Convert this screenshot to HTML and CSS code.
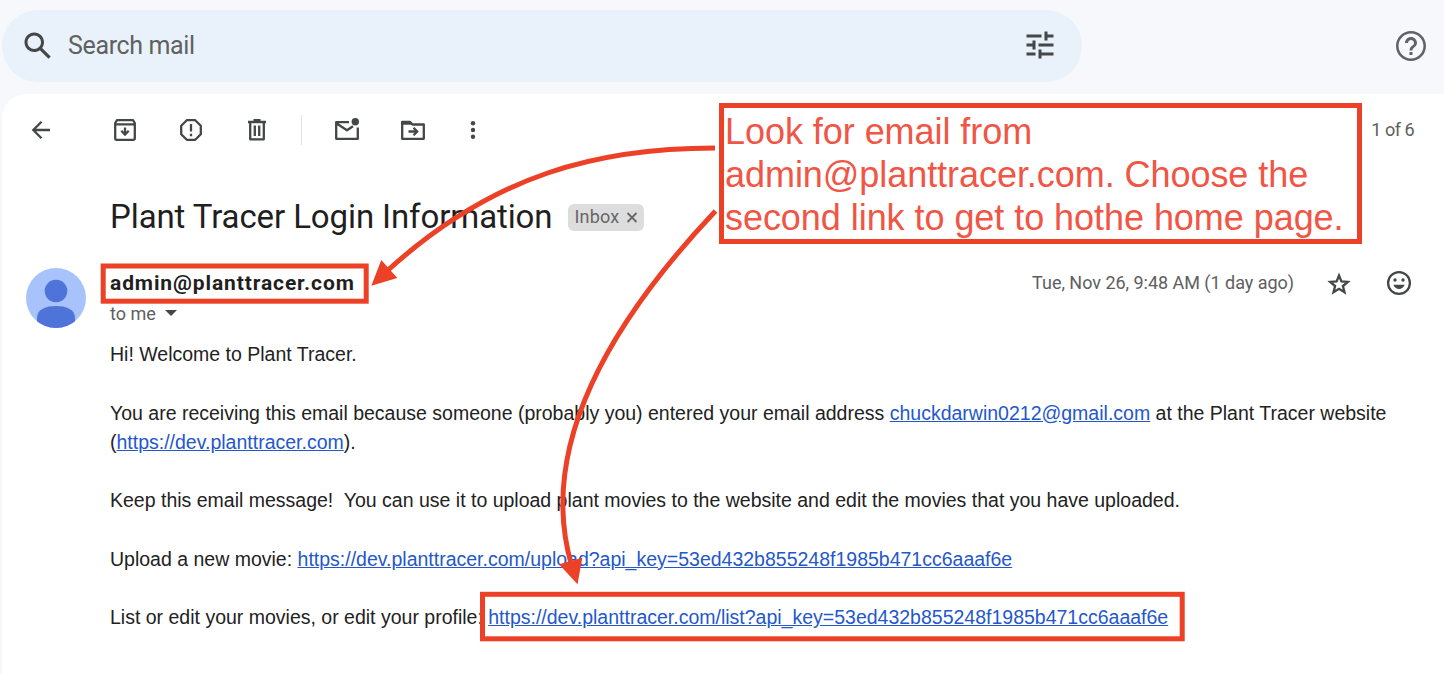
FILE: index.html
```html
<!DOCTYPE html>
<html lang="en">
<head>
<meta charset="utf-8">
<title>Plant Tracer Login Information</title>
<link rel="stylesheet" href="styles.css">
</head>
<body>
<header class="topbar">
  <div class="search">
    <svg class="icon-lg" viewBox="0 0 24 24"><path fill="#444746" d="M20.49 19l-5.73-5.73C15.53 12.2 16 10.91 16 9.5 16 5.91 13.09 3 9.5 3S3 5.91 3 9.5 5.91 16 9.5 16c1.41 0 2.7-.47 3.77-1.24L19 20.49 20.49 19zM5 9.5C5 7.01 7.01 5 9.5 5S14 7.01 14 9.5 11.99 14 9.5 14 5 11.99 5 9.5z"/></svg>
    <span class="search-text">Search mail</span>
    <svg class="icon-lg tune" viewBox="0 0 24 24"><path fill="#444746" d="M3 17v2h6v-2H3zM3 5v2h10V5H3zm10 16v-2h8v-2h-8v-2h-2v6h2zM7 9v2H3v2h4v2h2V9H7zm14 4v-2H11v2h10zm-6-4h2V7h4V5h-4V3h-2v6z"/></svg>
  </div>
  <svg class="icon-lg" viewBox="0 0 24 24"><path fill="#5f6368" d="M11 18h2v-2h-2v2zm1-16C6.480 2 2 6.480 2 12s4.480 10 10 10 10-4.480 10-10S17.520 2 12 2zm0 18.300c-4.600 0-8.300-3.700-8.300-8.300s3.700-8.300 8.300-8.300 8.300 3.700 8.300 8.300-3.700 8.300-8.300 8.300zm0-14.300c-2.210 0-4 1.790-4 4h2c0-1.100.9-2 2-2s2 .9 2 2c0 2-3 1.750-3 5h2c0-2.250 3-2.500 3-5 0-2.210-1.790-4-4-4z"/></svg>
</header>
<main class="panel">
  <div class="toolbar">
    <svg class="icon back" viewBox="0 0 30 30"><path class="line" d="M24 15H7.500M15.500 6.800L7.300 15l8.200 8.200"/></svg>
    <svg class="icon archive" viewBox="0 0 30 30"><path class="line" stroke-linejoin="round" d="M5.200 8v15.300q0 1.500 1.500 1.500h16.600q1.500 0 1.500-1.500V8l-1.800-2.800H7zM5 9.300h20"/><path class="line" d="M15 12.500v6.500"/><path class="line" d="M11.300 15.800l3.700 3.700 3.700-3.700"/></svg>
    <svg class="icon spam" viewBox="0 0 30 30"><path class="line" stroke-linejoin="round" d="M10.800 5.200h8.400l5.600 5.600v8.400l-5.600 5.600h-8.400l-5.600-5.600v-8.400z"/><path class="line" d="M15 9v7.500M15 18.800v2.400"/></svg>
    <svg class="icon trash" viewBox="0 0 30 30"><path class="line" stroke-linejoin="round" d="M6 7h18M11.500 5.200h7M8.200 7v17.300h13.600V7M12.800 10.500v10.500M17.200 10.500v10.500"/></svg>
    <span class="divider"></span>
    <svg class="icon mark" viewBox="0 0 30 30"><path class="line" stroke-linejoin="round" d="M17 7.200H4.200v16.600h21.600V12.500M4.700 8.500l10.300 6.800 6-4"/><circle cx="23.300" cy="6.800" r="3.700" fill="#444746"/></svg>
    <svg class="icon move" viewBox="0 0 30 30"><path class="line" stroke-linejoin="round" d="M4.200 7v16.800h21.600V9.500H14.500L12 7z"/><path fill="#444746" d="M3.500 6h9l3 3.800h-12z"/><path class="line" d="M10.500 16.500h8M15.500 12.800l3.700 3.700-3.700 3.700"/></svg>
    <svg class="icon more" viewBox="0 0 30 30"><g fill="#444746"><circle cx="15" cy="8.200" r="2.200"/><circle cx="15" cy="15" r="2.200"/><circle cx="15" cy="21.800" r="2.200"/></g></svg>
    <span class="count">1 of 6</span>
  </div>
  <div class="subject-row">
    <h1 class="subject">Plant Tracer Login Information</h1>
    <span class="label"><span>Inbox</span><svg class="close" viewBox="0 0 12 12"><path d="M1.500 2.500l9 9M10.500 2.500l-9 9"/></svg></span>
  </div>
  <div class="message">
    <svg class="avatar" viewBox="0 0 60 60"><defs><clipPath id="disc"><circle cx="30" cy="30" r="30"/></clipPath></defs><g clip-path="url(#disc)"><path fill="#a8c3fb" d="M0 0h60v60H0z"/><circle cx="30" cy="23" r="11.300" fill="#4f74d9"/><path fill="#4f74d9" d="M11 60V50C11 41 20 38 30 38s19 3 19 12v10z"/></g></svg>
    <div class="content">
      <div class="meta">
        <span class="sender">admin@planttracer.com</span>
        <span class="date">Tue, Nov 26, 9:48 AM (1 day ago)</span>
        <svg class="icon star" viewBox="0 0 30 30"><path class="line" d="M15 7.500l2.400 5.900 6.400.5-4.900 4.100 1.600 6.200-5.500-3.400-5.500 3.400 1.600-6.200-4.900-4.100 6.400-.5z"/></svg>
        <svg class="icon smile" viewBox="0 0 30 30"><circle class="line" cx="15" cy="15" r="10.900"/><circle cx="11" cy="12" r="1.700" fill="#444746"/><circle cx="19" cy="12" r="1.700" fill="#444746"/><path fill="#444746" d="M9.300 16.800h11.400c-1 2.700-3.200 4.200-5.700 4.200s-4.700-1.500-5.700-4.200z"/></svg>
      </div>
      <div class="to"><span>to me</span><svg class="caret" viewBox="0 0 12 6"><path fill="#444746" d="M0 0h12L6 6z"/></svg></div>
      <div class="body">
        <p>Hi! Welcome to Plant Tracer.</p>
        <p>You are receiving this email because someone (probably you) entered your email address <a>chuckdarwin0212@gmail.com</a> at the Plant Tracer website<br>(<a>https://dev.planttracer.com</a>).</p>
        <p>Keep this email message!&nbsp; You can use it to upload plant movies to the website and edit the movies that you have uploaded.</p>
        <p>Upload a new movie: <a>https://dev.planttracer.com/upload?api_key=53ed432b855248f1985b471cc6aaaf6e</a></p>
        <p>List or edit your movies, or edit your profile: <a>https://dev.planttracer.com/list?api_key=53ed432b855248f1985b471cc6aaaf6e</a></p>
      </div>
    </div>
  </div>
</main>
<div class="note">Look for email from<br>admin@planttracer.com. Choose the<br>second link to get to hothe home page.</div>
<svg class="marks" viewBox="0 0 1444 674">
  <g fill="none" stroke="#ec4126" stroke-width="5">
    <rect x="103.200" y="266" width="263" height="35.200"/>
    <rect x="482.500" y="594.300" width="699.700" height="44.500"/>
    <path d="M715 148C600 148 495 173 387 271"/>
    <path d="M715.500 211C620 312 535 440 571.500 565"/>
  </g>
  <path fill="#ec4126" d="M371.300 285.700l10-25.700 16 18zM577.500 584.300l-18.500-20 23.300-6.600z"/>
</svg>
</body>
</html>
```
FILE: styles.css
```css
body { margin: 0; width: 1444px; height: 674px; overflow: hidden; background: #f6f8fc; font-family: Roboto, "Liberation Sans", sans-serif; color: #1f1f1f; }
svg { display: block; flex: none; }
.topbar { height: 94px; box-sizing: border-box; padding: 10px 15px 0 2px; display: flex; align-items: flex-start; justify-content: space-between; }
.topbar > .icon-lg { margin-top: 18px; }
.search { width: 1080px; height: 72px; box-sizing: border-box; border-radius: 36px; background: #e9f1fb; display: flex; align-items: center; padding: 0 24px 0 18px; }
.search-text { margin-left: 12px; padding-bottom: 2px; font-size: 25px; letter-spacing: -0.35px; color: #5f6060; white-space: nowrap; }
.icon-lg { width: 36px; height: 36px; }
.tune { margin-left: auto; margin-bottom: 2px; }
.panel { margin-left: 2px; height: 580px; background: #fff; border-top-left-radius: 24px; }
.toolbar { height: 72px; display: flex; align-items: center; padding: 0 30px 0 24px; }
.icon { width: 30px; height: 30px; }
.line { fill: none; stroke: #444746; stroke-width: 2.3; }
.archive { margin-left: 54px; }
.spam, .trash, .move { margin-left: 36px; }
.divider { width: 1px; height: 30px; margin-left: 29px; background: #e3e3e3; }
.mark, .more { margin-left: 30px; }
.count { margin-left: auto; padding-bottom: 2px; font-size: 18px; letter-spacing: -0.5px; color: #5e5e5e; white-space: nowrap; }
.subject-row { height: 102px; display: flex; align-items: center; padding-left: 108px; }
.subject { margin: 0; font-size: 33px; font-weight: 400; line-height: 40px; letter-spacing: -0.1px; white-space: nowrap; }
.label { height: 27px; width: 76px; box-sizing: border-box; margin-left: 16px; padding: 0 6px; border-radius: 6px; background: #ddd; display: flex; align-items: center; justify-content: space-between; font-size: 18px; letter-spacing: 0.2px; line-height: 24px; padding-bottom: 1px; color: #666; }
.close { width: 12px; height: 13px; fill: none; stroke: #666; stroke-width: 1.8; }
.message { display: flex; padding-left: 24px; gap: 24px; }
.avatar { width: 60px; height: 60px; }
.content { flex: 1; }
.meta { height: 30px; display: flex; align-items: center; padding-right: 30px; white-space: nowrap; }
.sender { font-size: 21px; font-weight: 700; letter-spacing: 0.89px; }
.date { margin-left: auto; padding-bottom: 1px; font-size: 18px; letter-spacing: -0.03px; color: #5e5e5e; }
.star, .smile { margin-left: 30px; }
.to { height: 30px; display: flex; align-items: center; gap: 9px; font-size: 18px; color: #5e5e5e; }
.body { padding-top: 12px; font: 19.5px/29.25px "Liberation Sans", Arial, sans-serif; color: #222; white-space: nowrap; }
.body p { margin: 0 0 29.25px; }
.body a { color: #2457cc; text-decoration: underline; }
.caret { width: 12px; height: 6px; }
.note { position: absolute; left: 719px; top: 103px; width: 643px; height: 141px; box-sizing: border-box; border: 5px solid #ec4126; background: #fff; padding: 2px 0 0 1px; font: 36px/43px "Liberation Sans", Arial, sans-serif; letter-spacing: -0.05px; color: #f05545; white-space: nowrap; }
.marks { position: absolute; left: 0; top: 0; width: 1444px; height: 674px; }
```
